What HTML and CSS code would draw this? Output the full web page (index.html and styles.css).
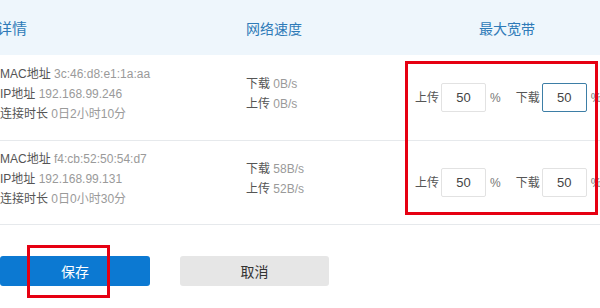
FILE: index.html
```html
<!DOCTYPE html>
<html lang="zh-CN">
<head>
  <meta charset="UTF-8" />
  <title>限速设置</title>
  <link rel="stylesheet" href="styles.css">
</head>
<body>

<div class="page">
  <!-- 表头 -->
  <div class="row head">
    <div class="c1">详情</div>
    <div class="c2">网络速度</div>
    <div class="c3 center">最大宽带</div>
  </div>

  <!-- 设备 1 -->
  <div class="row item">
    <div class="c1 info">
      <div><span class="lbl">MAC地址</span> <span class="val">3c:46:d8:e1:1a:aa</span></div>
      <div><span class="lbl">IP地址</span> <span class="val">192.168.99.246</span></div>
      <div><span class="lbl">连接时长</span> <span class="val">0日2小时10分</span></div>
    </div>
    <div class="c2 speed">
      <div><span class="lbl">下载</span> <span class="val">0B/s</span></div>
      <div><span class="lbl">上传</span> <span class="val">0B/s</span></div>
    </div>
    <div class="c3 limit">
      <span class="lbl">上传</span>
      <input class="num" type="text" value="50">
      <span class="pct">%</span>
      <span class="lbl gap">下载</span>
      <input class="num focus" type="text" value="50">
      <span class="pct">%</span>
    </div>
  </div>

  <!-- 设备 2 -->
  <div class="row item second">
    <div class="c1 info">
      <div><span class="lbl">MAC地址</span> <span class="val">f4:cb:52:50:54:d7</span></div>
      <div><span class="lbl">IP地址</span> <span class="val">192.168.99.131</span></div>
      <div><span class="lbl">连接时长</span> <span class="val">0日0小时30分</span></div>
    </div>
    <div class="c2 speed">
      <div><span class="lbl">下载</span> <span class="val">58B/s</span></div>
      <div><span class="lbl">上传</span> <span class="val">52B/s</span></div>
    </div>
    <div class="c3 limit">
      <span class="lbl">上传</span>
      <input class="num" type="text" value="50">
      <span class="pct">%</span>
      <span class="lbl gap">下载</span>
      <input class="num" type="text" value="50">
      <span class="pct">%</span>
    </div>
  </div>

  <!-- 按钮 -->
  <div class="actions">
    <button class="btn save">保存</button>
    <button class="btn cancel">取消</button>
  </div>

  <!-- 红框标注 -->
  <div class="mark mark-limit"></div>
  <div class="mark mark-save"></div>
</div>

</body>
</html>
```

FILE: styles.css
```css
body {
  margin: 0;
  background: #fff;
  font-family: "Liberation Sans", "Noto Sans CJK SC", sans-serif;
  overflow: hidden;
}
.page {
  position: relative;
  margin-left: -4px;
  width: 618px;
  height: 308px;
}
.row {
  display: flex;
  border-bottom: 1px solid #e6e9ec;
}
.c1 {
  width: 250px;
}
.c2 {
  width: 154px;
}
.c3 {
  width: 214px;
}
.center {
  text-align: center;
}
.head {
  height: 55px;
  align-items: center;
  background: #eef6fc;
  border-bottom: none;
  color: #2f7bb8;
  font-size: 14px;
}
.head .c1 {
  font-size: 15px;
  padding-left: 1px;
  box-sizing: border-box;
}
.item {
  height: 85px;
  font-size: 12px;
  line-height: 20px;
}
.second {
  height: 83px;
}
.lbl {
  color: #555;
}
.val {
  color: #9a9a9a;
}
.info {
  padding-top: 9px;
  box-sizing: border-box;
  padding-left: 4px;
}
.second .info {
  padding-top: 8px;
}
.speed {
  align-self: center;
  margin-bottom: 7px;
}
.limit {
  display: flex;
  align-items: center;
  padding-left: 15px;
  box-sizing: border-box;
}
.num {
  width: 45px;
  height: 29px;
  box-sizing: border-box;
  margin: 0 4px 0 2px;
  border: 1px solid #e2e2e2;
  border-radius: 2px;
  text-align: center;
  font-family: inherit;
  font-size: 13px;
  color: #444;
  padding: 0;
  outline: none;
}
.num.focus {
  border-color: #3d7ea6;
}
.pct {
  color: #777;
  font-size: 12px;
}
.gap {
  margin-left: 15px;
}
.actions {
  display: flex;
  gap: 30px;
  padding: 31px 0 0 4px;
}
.btn {
  width: 150px;
  height: 30px;
  border: none;
  border-radius: 3px;
  font-family: inherit;
  font-size: 14px;
  cursor: pointer;
}
.save {
  background: #0c79d2;
  color: #fff;
}
.cancel {
  background: #e6e6e6;
  color: #333;
  width: 149px;
}
.mark {
  position: absolute;
  border: 3px solid #e60012;
  box-sizing: border-box;
}
.mark-limit {
  left: 409px;
  top: 61px;
  width: 193px;
  height: 154px;
}
.mark-save {
  left: 31px;
  top: 245px;
  width: 83px;
  height: 53px;
}
```
